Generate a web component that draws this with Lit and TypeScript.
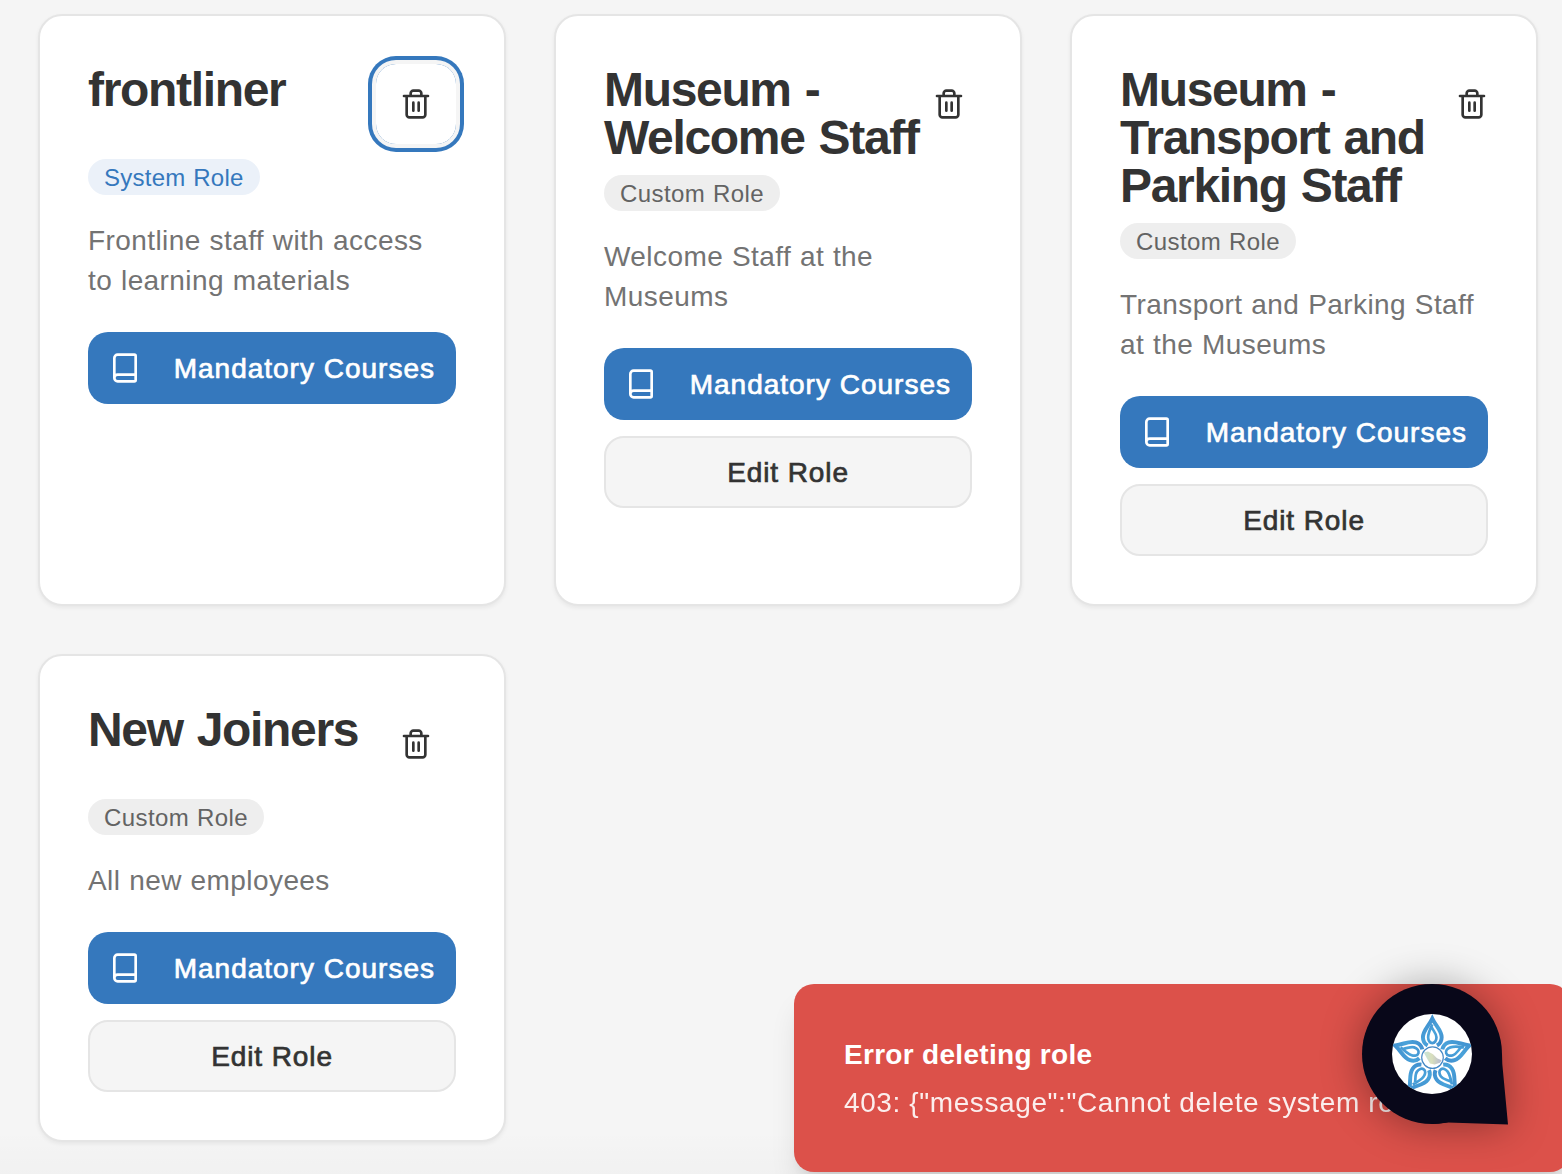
import { LitElement, html, svg, css, nothing } from "lit";
import { customElement, property } from "lit/decorators.js";
import { classMap } from "lit/directives/class-map.js";
import { styleMap } from "lit/directives/style-map.js";

interface Role {
  name: string;
  description: string;
  system: boolean;
  deleteWidth: number;
  focused?: boolean;
}

const ROLES: Role[] = [
  { name: "frontliner", description: "Frontline staff with access to learning materials", system: true, deleteWidth: 80, focused: true },
  { name: "Museum - Welcome Staff", description: "Welcome Staff at the Museums", system: false, deleteWidth: 46 },
  { name: "Museum - Transport and Parking Staff", description: "Transport and Parking Staff at the Museums", system: false, deleteWidth: 32 },
  { name: "New Joiners", description: "All new employees", system: false, deleteWidth: 80 },
];

@customElement("role-card")
export class RoleCard extends LitElement {
  @property({ attribute: false }) role_!: Role;

  static styles = css`
    :host {
      display: flex;
      flex-direction: column;
      box-sizing: border-box;
      padding: 48px;
      border: 2px solid #e5e5e5;
      border-radius: 24px;
      background: #fff;
      box-shadow: 0 2px 4px rgba(0, 0, 0, 0.06);
    }
    .header {
      display: flex;
      align-items: flex-start;
    }
    .title {
      flex: 1 1 0;
      min-width: 0;
      margin: 0;
      padding-top: 2px;
      margin-bottom: -2px;
      font-size: 48px;
      line-height: 48px;
      font-weight: 700;
      letter-spacing: -1.33px;
      word-spacing: 2px;
      color: #333;
    }
    .delete {
      flex: none;
      display: flex;
      align-items: center;
      justify-content: center;
      height: 80px;
      padding: 0;
      border: 0;
      border-radius: 20px;
      background: transparent;
      color: #333;
    }
    .delete.focused {
      box-shadow: 0 0 0 4px #f5f5f5, 0 0 0 8px #3578bd;
    }
    .icon {
      display: block;
      flex: none;
      width: 32px;
      height: 32px;
      fill: none;
      stroke: currentColor;
      stroke-width: 2;
      stroke-linecap: round;
      stroke-linejoin: round;
    }
    .badge {
      align-self: flex-start;
      box-sizing: border-box;
      height: 36px;
      margin-top: 15px;
      padding: 1px 16px 0;
      border-radius: 18px;
      font-size: 24px;
      line-height: 36px;
      white-space: nowrap;
      letter-spacing: 0.42px;
      word-spacing: 0.8px;
      color: #636363;
      background: #eee;
    }
    .badge.system {
      letter-spacing: 0.25px;
      color: #3578bd;
      background: #ebf1f9;
    }
    .description {
      margin: 26px 0 31px;
      padding-right: 4px;
      font-size: 28px;
      line-height: 40px;
      letter-spacing: 0.42px;
      word-spacing: 0.6px;
      color: #737373;
    }
    .actions {
      display: flex;
      flex-direction: column;
      gap: 16px;
    }
    .button {
      display: flex;
      align-items: center;
      justify-content: center;
      box-sizing: border-box;
      height: 72px;
      padding: 0 20px;
      border: 2px solid #e5e5e5;
      border-radius: 20px;
      background: #f5f5f5;
      color: #333;
      font-family: inherit;
      font-size: 28px;
      line-height: 40px;
      letter-spacing: 0.9px;
      white-space: nowrap;
      -webkit-text-stroke: 0.7px currentColor;
    }
    .label {
      padding-top: 2px;
    }
    .button.primary {
      justify-content: space-between;
      border: 0;
      padding: 0 21px;
      background: #3578bd;
      color: #fff;
      letter-spacing: 1px;
    }
  `;

  render() {
    const r = this.role_;
    return html`
      <div class="header">
        <h3 class="title">${r.name}</h3>
        <button
          class=${classMap({ delete: true, focused: !!r.focused })}
          style=${styleMap({ width: `${r.deleteWidth}px` })}
          aria-label="Delete"
        >
          <svg class="icon" viewBox="0 0 24 24">
            <path d="M3 6h18M19 6v14c0 1-1 2-2 2H7c-1 0-2-1-2-2V6M8 6V4c0-1 1-2 2-2h4c1 0 2 1 2 2v2M10 11v6M14 11v6" />
          </svg>
        </button>
      </div>
      <span class=${classMap({ badge: true, system: r.system })}>${r.system ? "System Role" : "Custom Role"}</span>
      <p class="description">${r.description}</p>
      <div class="actions">
        <button class="button primary">
          <svg class="icon" viewBox="0 0 24 24">
            <path d="M4 19.5v-15A2.5 2.5 0 0 1 6.5 2H19a1 1 0 0 1 1 1v18a1 1 0 0 1-1 1H6.5a2.5 2.5 0 0 1 0-5H20" />
          </svg>
          <span class="label">Mandatory Courses</span>
        </button>
        ${r.system ? nothing : html`<button class="button"><span class="label">Edit Role</span></button>`}
      </div>
    `;
  }
}

@customElement("chat-bubble")
export class ChatBubble extends LitElement {
  static styles = css`
    :host {
      display: block;
    }
    .bubble {
      display: block;
      overflow: visible;
      filter: drop-shadow(0 2px 20px rgba(0, 0, 0, 0.36));
    }
  `;

  render() {
    const petal = (angle: number) => svg`
      <g transform="rotate(${angle})">
        <path stroke-width="3.8" d="M-4.5 -11.6C-7.6 -13.4 -9 -16 -9 -19.6C-9 -26 -3.6 -30 0 -37.5C3.6 -30 9 -26 9 -19.6C9 -16 7.6 -13.4 4.5 -11.6" />
        <path stroke-width="2.6" d="M0 -32C-2.4 -27 -4 -23.4 -4 -19.6C-4 -16.4 -2.4 -14 0 -14C2.4 -14 4 -16.4 4 -19.6C4 -22.8 1.6 -25 -0.6 -29" />
      </g>`;
    return html`
      <svg class="bubble" width="146" height="141" viewBox="0 0 146 141">
        <defs>
          <clipPath id="face"><circle cx="70" cy="70" r="40" /></clipPath>
          <linearGradient id="blue" gradientUnits="userSpaceOnUse" x1="-12" y1="-36" x2="12" y2="-10">
            <stop offset="0" stop-color="#3d8acb" />
            <stop offset="0.5" stop-color="#4aa3da" />
            <stop offset="1" stop-color="#3f8bcd" />
          </linearGradient>
          <linearGradient id="map" x1="0" y1="0" x2="1" y2="0">
            <stop offset="0" stop-color="#c5e3da" />
            <stop offset="0.45" stop-color="#d9dfbd" />
            <stop offset="1" stop-color="#b4b8d2" />
          </linearGradient>
        </defs>
        <circle cx="70" cy="70" r="70" fill="#080719" />
        <path fill="#080719" d="M140 70L140.3 80L146 140.5L86 138.6L70 140V70Z" />
        <circle cx="70" cy="70" r="40" fill="#fff" />
        <g clip-path="url(#face)">
          <g transform="translate(70.3 73.6) scale(1.04)" fill="none" stroke="url(#blue)" stroke-linejoin="miter">
            ${[0, 72, 144, 216, 288].map(petal)}
          </g>
          <circle cx="70.5" cy="73.6" r="10.8" fill="#fff" stroke="#4588c5" stroke-width="1.2" />
          <path fill="url(#map)" d="M61.8 68.4l4.2-.8 5 2.6 4 4 4.6 2-1.6 2.6-5.4 1.8-4.6-1.2-3-5z" />
        </g>
      </svg>
    `;
  }
}

@customElement("app-root")
export class AppRoot extends LitElement {
  static styles = css`
    :host {
      display: block;
      position: relative;
      box-sizing: border-box;
      width: 1562px;
      height: 1174px;
      overflow: hidden;
      background: linear-gradient(to bottom, rgba(0, 0, 0, 0) 1130px, rgba(0, 0, 0, 0.016) 1174px), #f5f5f5;
      font-family: "Liberation Sans", Arial, Helvetica, sans-serif;
    }
    .grid {
      display: grid;
      grid-template-columns: repeat(3, 468px);
      grid-template-rows: 592px 488px;
      gap: 48px;
      padding: 14px 0 0 38px;
    }
    .toast {
      position: absolute;
      left: 794px;
      top: 984px;
      box-sizing: border-box;
      width: 776px;
      height: 188px;
      padding: 51px 50px 0;
      border-radius: 20px;
      background: #dc514a;
      box-shadow: 0 20px 30px -6px rgba(0, 0, 0, 0.12), 0 8px 12px -8px rgba(0, 0, 0, 0.12);
      color: #fff;
      font-size: 28px;
      line-height: 40px;
      white-space: nowrap;
    }
    .toast-title {
      font-weight: 700;
      letter-spacing: 0.3px;
    }
    .toast-text {
      margin-top: 8px;
      letter-spacing: 0.6px;
      opacity: 0.9;
    }
    .chat {
      position: absolute;
      left: 1362px;
      top: 984px;
    }
  `;

  render() {
    return html`
      <div class="grid">${ROLES.map((r) => html`<role-card .role_=${r}></role-card>`)}</div>
      <div class="toast">
        <div class="toast-title">Error deleting role</div>
        <div class="toast-text">403: {"message":"Cannot delete system role"}</div>
      </div>
      <chat-bubble class="chat"></chat-bubble>
    `;
  }
}
